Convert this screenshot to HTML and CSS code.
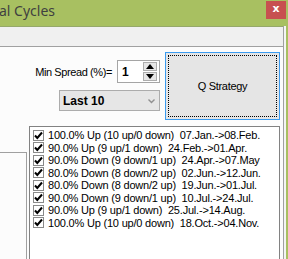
FILE: index.html
```html
<!DOCTYPE html>
<html lang="en">
<head>
  <meta charset="UTF-8">
  <title>Seasonal Cycles</title>
  <link rel="stylesheet" href="styles.css">
</head>
<body>

  <div class="window">
    <div class="titlebar">
      <span class="title">al Cycles</span>
      <span class="close">x</span>
    </div>

    <div class="client">
      <div class="content">
        <div class="toolstrip"></div>

        <div class="main">
          <div class="controls">
            <div class="settings">
              <div class="spreadRow">
                <span class="label">Min Spread (%)=</span>
                <div class="spin">
                  <span class="spinValue">1</span>
                  <div class="spinButtons">
                    <span class="spinBtn"><svg width="8" height="5" viewBox="0 0 8 5"><polygon points="0,5 8,5 4,0" fill="#000"/></svg></span>
                    <span class="spinBtn"><svg width="8" height="5" viewBox="0 0 8 5"><polygon points="0,0 8,0 4,5" fill="#000"/></svg></span>
                  </div>
                </div>
              </div>
              <div class="combo">
                <span>Last 10</span>
                <svg class="chevron" width="7" height="5" viewBox="0 0 7 5"><polyline points="0.5,0.5 3.5,3.5 6.5,0.5" fill="none" stroke="#909090" stroke-width="1.4"/></svg>
              </div>
            </div>
            <button class="strategy"><span class="focusRect">Q Strategy</span></button>
          </div>

          <div class="lower">
            <div class="leftPanel"></div>
            <ul class="cycles" id="cycles"></ul>
          </div>
        </div>
      </div>
      <div class="gutter"></div>
      <div class="edge"></div>
    </div>
  </div>

  <script>
    var cycles = [
      "100.0% Up (10 up/0 down)  07.Jan.->08.Feb.",
      "90.0% Up (9 up/1 down)  24.Feb.->01.Apr.",
      "90.0% Down (9 down/1 up)  24.Apr.->07.May",
      "80.0% Down (8 down/2 up)  02.Jun.->12.Jun.",
      "80.0% Down (8 down/2 up)  19.Jun.->01.Jul.",
      "90.0% Down (9 down/1 up)  10.Jul.->24.Jul.",
      "90.0% Up (9 up/1 down)  25.Jul.->14.Aug.",
      "100.0% Up (10 up/0 down)  18.Oct.->04.Nov."
    ];
    var list = document.getElementById("cycles");
    for (var i = 0; i < cycles.length; i++) {
      var li = document.createElement("li");
      li.innerHTML = '<span class="check"><svg width="9" height="9" viewBox="0 0 9 9"><polyline points="1,4.5 3.3,7 8,1.5" fill="none" stroke="#000" stroke-width="2"/></svg></span>';
      var text = document.createElement("span");
      text.className = "cycleText";
      text.innerText = cycles[i];
      li.appendChild(text);
      list.appendChild(li);
    }
  </script>

</body>
</html>
```

FILE: styles.css
```css
html, body {
  margin: 0;
  padding: 0;
}
body {
  width: 288px;
  height: 259px;
  overflow: hidden;
  background-color: #fcfcfc;
  font-family: 'Liberation Sans', Arial, sans-serif;
  font-size: 11px;
  color: #000;
}
.window {
  display: flex;
  flex-direction: column;
  height: 259px;
}
.titlebar {
  height: 26px;
  flex: none;
  background-color: #a8c061;
  display: flex;
  align-items: flex-start;
  justify-content: space-between;
}
.title {
  font-family: 'Noto Sans', 'Open Sans', sans-serif;
  font-size: 14px;
  color: #404040;
  line-height: 20px;
  margin-left: -1px;
  margin-top: 1px;
}
.close {
  width: 20px;
  height: 18px;
  margin-top: 1px;
  margin-right: 2px;
  background-color: #c75050;
  color: #fff;
  font-family: 'DejaVu Sans', sans-serif;
  font-weight: bold;
  font-size: 11px;
  line-height: 16px;
  text-align: center;
}
.client {
  flex: 1;
  display: flex;
  min-height: 0;
}
.content {
  flex: 1;
  display: flex;
  flex-direction: column;
  border-right: 1px solid #a0a0a0;
  min-width: 0;
}
.gutter {
  width: 2px;
  background-color: #f4f4f4;
}
.edge {
  width: 2px;
  background-color: #a8c061;
}
.toolstrip {
  height: 19px;
  flex: none;
  background-color: #f0f0f0;
  border-top: 1px solid #95a86a;
  border-bottom: 1px solid #a0a0a0;
}
.main {
  flex: 1;
  display: flex;
  flex-direction: column;
  padding: 5px 3px 0 0;
  min-height: 0;
}
.controls {
  display: flex;
  justify-content: flex-end;
  gap: 5px;
}
.settings {
  display: flex;
  flex-direction: column;
  align-items: flex-end;
  padding-top: 8px;
  gap: 7px;
}
.spreadRow {
  display: flex;
  align-items: center;
  gap: 5px;
}
.label {
  letter-spacing: -0.4px;
}
.spin {
  width: 35px;
  height: 21px;
  border: 1px solid #a5a5a5;
  background-color: #fff;
  display: flex;
  align-items: center;
  justify-content: space-between;
  padding: 0 2px 0 4px;
}
.spinValue {
  font-weight: bold;
  font-size: 12px;
}
.spinButtons {
  display: flex;
  flex-direction: column;
  gap: 1px;
}
.spinBtn {
  width: 12px;
  height: 7px;
  border: 1px solid #adadad;
  background-color: #e6e6e6;
  display: flex;
  align-items: center;
  justify-content: center;
}
.combo {
  width: 99px;
  height: 19px;
  border: 1px solid #acacac;
  background-color: #e6e6e6;
  display: flex;
  align-items: center;
  justify-content: space-between;
  padding: 0 4px 0 3px;
  box-sizing: content-box;
  width: 92px;
  font-weight: bold;
  font-size: 12px;
}
.chevron {
  margin-top: 1px;
}
.strategy {
  width: 115px;
  height: 68px;
  margin: 0;
  padding: 2px;
  border: 1px solid #3c9cf0;
  background-color: #e5e5e5;
  font-family: 'Liberation Sans', Arial, sans-serif;
  font-size: 11px;
  color: #000;
  display: flex;
}
.focusRect {
  flex: 1;
  border: 1px dotted #000;
  display: flex;
  align-items: center;
  justify-content: center;
  letter-spacing: -0.3px;
}
.lower {
  flex: 1;
  display: flex;
  gap: 2px;
  margin-top: 6px;
  min-height: 0;
}
.leftPanel {
  width: 26px;
  margin-top: 26px;
  border-top: 1px solid #a0a0a0;
  border-right: 1px solid #a0a0a0;
}
.cycles {
  flex: 1;
  margin: 0;
  padding: 2px 0 0 3px;
  list-style: none;
  border: 1px solid #828282;
  border-bottom: none;
  background-color: #fff;
}
.cycles li {
  display: flex;
  align-items: center;
  height: 12.5px;
  white-space: pre;
}
.check {
  width: 9px;
  height: 9px;
  border: 1px solid #8a8a8a;
  background-color: #fff;
  display: flex;
  align-items: center;
  justify-content: center;
  margin-right: 4px;
}
.cycleText {
  letter-spacing: -0.2px;
  line-height: 12px;
}
```
